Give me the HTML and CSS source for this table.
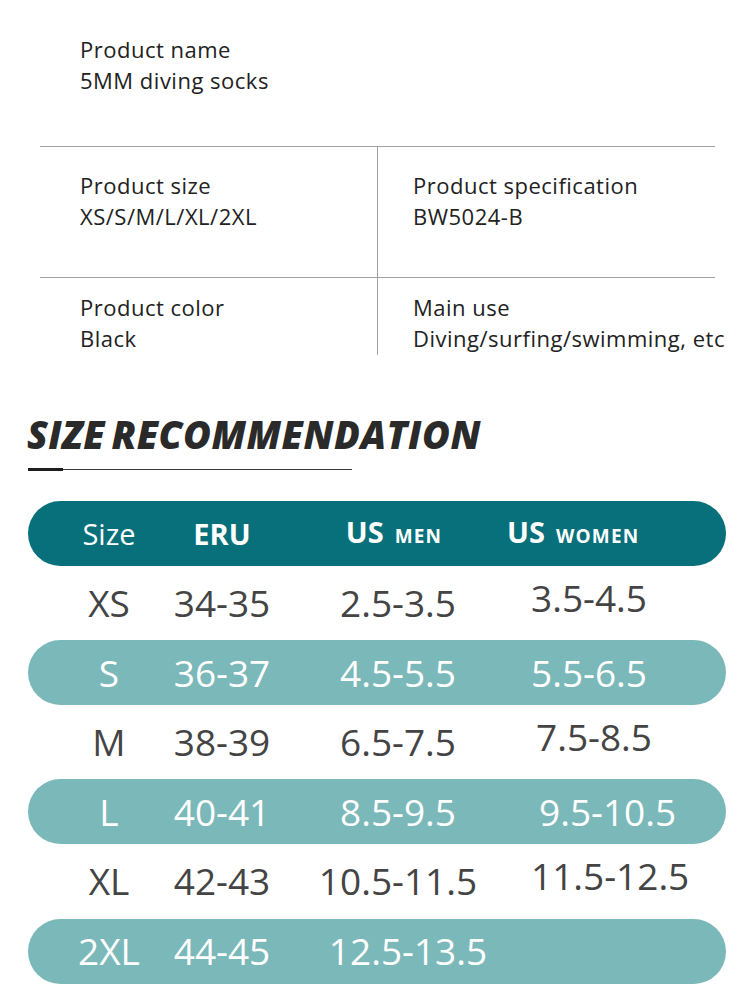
FILE: index.html
```html
<!DOCTYPE html>
<html lang="en">
<head>
<meta charset="utf-8">
<title>5MM diving socks – size recommendation</title>
<link rel="stylesheet" href="styles.css">
</head>
<body>
<main class="page">
  <section class="specs">
    <div class="spec-head">
      <div class="spec">
        <p class="label">Product name</p>
        <p class="value">5MM diving socks</p>
      </div>
    </div>
    <div class="spec-row spec-row-mid">
      <div class="spec spec-left">
        <p class="label">Product size</p>
        <p class="value">XS/S/M/L/XL/2XL</p>
      </div>
      <div class="spec spec-right">
        <p class="label">Product specification</p>
        <p class="value">BW5024-B</p>
      </div>
    </div>
    <div class="spec-row spec-row-last">
      <div class="spec spec-left">
        <p class="label">Product color</p>
        <p class="value">Black</p>
      </div>
      <div class="spec spec-right">
        <p class="label">Main use</p>
        <p class="value">Diving/surfing/swimming, etc</p>
      </div>
    </div>
  </section>

  <section class="sizes">
    <h2 class="title">SIZE RECOMMENDATION</h2>
    <div class="rule"><span class="rule-thick"></span><span class="rule-thin"></span></div>

    <div class="table">
      <div class="row head">
        <span class="c1">Size</span>
        <span class="c2 b">ERU</span>
        <span class="c3 b">US<small>MEN</small></span>
        <span class="c4 b">US<small>WOMEN</small></span>
      </div>
      <div class="row plain">
        <span class="c1">XS</span><span class="c2">34-35</span><span class="c3">2.5-3.5</span><span class="c4">3.5-4.5</span>
      </div>
      <div class="row tint">
        <span class="c1">S</span><span class="c2">36-37</span><span class="c3">4.5-5.5</span><span class="c4">5.5-6.5</span>
      </div>
      <div class="row plain">
        <span class="c1">M</span><span class="c2">38-39</span><span class="c3">6.5-7.5</span><span class="c4 w2">7.5-8.5</span>
      </div>
      <div class="row tint">
        <span class="c1">L</span><span class="c2">40-41</span><span class="c3">8.5-9.5</span><span class="c4 w3">9.5-10.5</span>
      </div>
      <div class="row plain">
        <span class="c1">XL</span><span class="c2">42-43</span><span class="c3">10.5-11.5</span><span class="c4">11.5-12.5</span>
      </div>
      <div class="row tint">
        <span class="c1">2XL</span><span class="c2">44-45</span><span class="c3 w4">12.5-13.5</span><span class="c4"></span>
      </div>
    </div>
  </section>
</main>
</body>
</html>
```

FILE: styles.css
```css
* { box-sizing: border-box; }

html, body {
  margin: 0;
  padding: 0;
  background: #ffffff;
}

.page {
  width: 755px;
  font-family: "Open Sans", "Noto Sans", sans-serif;
}

/* ---------- product specs ---------- */
.specs {
  margin: 0 40px;
  color: #222222;
}

.spec p {
  margin: 0;
  font-size: 22px;
  line-height: 31px;
  letter-spacing: 0.5px;
  white-space: nowrap;
}

.spec-head {
  height: 146px;
  padding: 34px 0 0 40px;
}

.spec-row {
  display: grid;
  grid-template-columns: 337px 1fr;
  border-top: 1.5px solid #a0a0a0;
}

.spec-row-mid { height: 131px; }
.spec-row-last { height: 78px; }

.spec-row-mid .spec { padding-top: 23px; }
.spec-row-last .spec { padding-top: 14px; }

.spec-left { padding-left: 40px; }
.spec-right {
  padding-left: 35px;
  border-left: 1.5px solid #a0a0a0;
}

/* ---------- size recommendation ---------- */
.sizes {
  padding: 54px 0 0 0;
}

.title {
  margin: 0 0 0 27px;
  font-family: "Open Sans", sans-serif;
  font-weight: 800;
  font-style: italic;
  font-size: 38px;
  line-height: 50px;
  letter-spacing: 0.5px;
  word-spacing: -4px;
  color: #2a2a2a;
}

.rule {
  display: flex;
  align-items: center;
  margin: 9px 0 0 28px;
  height: 3px;
}
.rule-thick {
  width: 35px;
  height: 3px;
  background: #1e1e1e;
}
.rule-thin {
  width: 289px;
  height: 1px;
  background: #3a3a3a;
}

.table {
  display: flex;
  flex-direction: column;
  gap: 4.6px;
  margin: 30px 0 0 28px;
  width: 698px;
}

.row {
  display: grid;
  grid-template-columns: 98px 128px 224px 1fr;
  align-items: center;
  height: 65px;
  padding-left: 32px;
  border-radius: 33px;
  font-size: 37px;
  color: #444444;
  white-space: nowrap;
}

.row span {
  text-align: center;
  line-height: 50px;
}
.row .c4 {
  text-align: left;
  padding-left: 21px;
}

.row.plain .c4 { padding-bottom: 10px; }
.row .w2 { padding-left: 26px; }
.row .w3 { padding-left: 29px; }
.row .w4 { padding-left: 20px; }

.row.tint {
  background: #7bb8b9;
  color: #ffffff;
}

.row.head {
  background: #07707a;
  color: #ffffff;
  font-size: 29px;
}
.row.head .c1 { font-weight: 500; }
.row.head .b { font-weight: 700; }
.row.head .c3 { padding-right: 8px; }
.row.head .c4 { padding-left: 0; margin-left: -3px; }
.row.head small {
  margin-left: 11px;
  font-size: 19px;
  font-weight: 700;
  letter-spacing: 1.2px;
}
```
